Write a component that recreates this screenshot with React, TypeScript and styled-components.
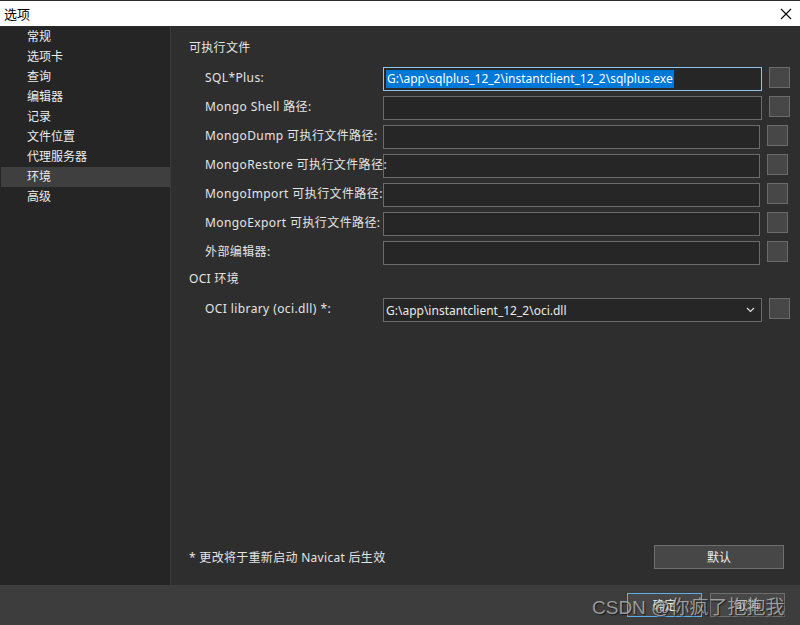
import React from 'react';
import styled, { createGlobalStyle } from 'styled-components';

const GlobalStyle = createGlobalStyle`
  html, body {
    margin: 0;
    padding: 0;
    background: #2d2d2d;
  }
  * {
    box-sizing: border-box;
  }
`;

const font = `"Noto Sans", "Noto Sans CJK SC", sans-serif`;

const Window = styled.div`
  width: 800px;
  height: 625px;
  display: flex;
  flex-direction: column;
  font-family: ${font};
  font-size: 12px;
  color: #e4e4e4;
  overflow: hidden;
`;

const TitleBar = styled.div`
  height: 27px;
  flex: none;
  background: #fff;
  border-top: 1px solid #2b2b2b;
  border-bottom: 1px solid #2b2b2b;
  display: flex;
  align-items: center;
  justify-content: space-between;
  padding: 0 8px 0 4px;
  color: #000;
  font-size: 13px;
`;

const CloseIcon = () => (
  <svg width="12" height="12" viewBox="0 0 12 12">
    <path d="M1 1 L11 11 M11 1 L1 11" stroke="#000" strokeWidth="1.1" />
  </svg>
);

const Body = styled.div`
  flex: 1;
  display: flex;
  min-height: 0;
`;

const Sidebar = styled.div`
  width: 171px;
  flex: none;
  background: #252525;
  border-right: 1px solid #3a3a3a;
  padding-left: 1px;
`;

const NavItem = styled.div<{ $active?: boolean }>`
  height: 20px;
  line-height: 20px;
  padding-left: 26px;
  background: ${(p) => (p.$active ? '#3f3f3f' : 'transparent')};
  color: #ececec;
`;

const Content = styled.div`
  flex: 1;
  background: #2e2e2e;
  display: flex;
  flex-direction: column;
  padding: 11px 10px 16px 18px;
`;

const Section = styled.div`
  display: flex;
  flex-direction: column;
  gap: 5px;
  margin-bottom: 4px;
`;

const SectionTitle = styled.div`
  height: 20px;
  line-height: 20px;
  margin-bottom: 4px;
  letter-spacing: 0.3px;
`;

const Row = styled.div`
  display: flex;
  align-items: flex-start;
  padding-left: 16px;
  height: 24px;
`;

const Label = styled.div`
  width: 178px;
  flex: none;
  height: 24px;
  line-height: 22px;
  white-space: nowrap;
  letter-spacing: 0.4px;
  position: relative;
  z-index: 2;
`;

const Field = styled.div<{ $focused?: boolean }>`
  flex: 1;
  height: 24px;
  margin-right: 7px;
  background: #262626;
  border: 1px solid ${(p) => (p.$focused ? '#8cc6ef' : '#6b6b6b')};
  display: flex;
  align-items: center;
  padding: 0 2px;
  color: #eaeaea;
`;

const Selected = styled.span`
  background: #0078d7;
  color: #fff;
  line-height: 18px;
  padding: 0 1px;
`;

const SelectText = styled.span`
  flex: 1;
`;

const Browse = styled.div<{ $narrow?: boolean }>`
  width: 21px;
  height: 21px;
  flex: none;
  margin-right: ${(p) => (p.$narrow ? 2 : 0)}px;
  background: #474747;
  border: 1px solid #6b6b6b;
`;

const Spacer = styled.div`
  flex: 1;
`;

const BottomRow = styled.div`
  display: flex;
  align-items: center;
  justify-content: space-between;
  padding-right: 6px;
`;

const Note = styled.div`
  color: #e4e4e4;
  letter-spacing: 0.3px;
`;

const Button = styled.div<{ $width: number; $primary?: boolean }>`
  width: ${(p) => p.$width}px;
  height: 24px;
  background: #474747;
  border: 1px solid ${(p) => (p.$primary ? '#5eaee8' : '#6e6e6e')};
  display: flex;
  align-items: center;
  justify-content: center;
  color: #ececec;
`;

const Footer = styled.div`
  height: 40px;
  flex: none;
  background: #3d3d3d;
  display: flex;
  align-items: center;
  justify-content: flex-end;
  gap: 8px;
  padding-right: 15px;
  position: relative;
`;

const Watermark = styled.div`
  position: absolute;
  left: 592px;
  top: 7px;
  font-family: "Liberation Sans", "Noto Sans CJK SC", sans-serif;
  font-size: 19px;
  color: rgba(190, 190, 190, 0.75);
  text-shadow: 1px 1px 1px rgba(0, 0, 0, 0.6);
  white-space: nowrap;
  pointer-events: none;
`;

const Chevron = () => (
  <svg width="9" height="6" viewBox="0 0 9 6">
    <path d="M1 1 L4.5 4.5 L8 1" stroke="#e0e0e0" strokeWidth="1.2" fill="none" />
  </svg>
);

const nav = ['常规', '选项卡', '查询', '编辑器', '记录', '文件位置', '代理服务器', '环境', '高级'];

const exeRows: { label: string; value?: string; narrow?: boolean }[] = [
  { label: 'SQL*Plus:', value: 'G:\\app\\sqlplus_12_2\\instantclient_12_2\\sqlplus.exe' },
  { label: 'Mongo Shell 路径:' },
  { label: 'MongoDump 可执行文件路径:', narrow: true },
  { label: 'MongoRestore 可执行文件路径:', narrow: true },
  { label: 'MongoImport 可执行文件路径:', narrow: true },
  { label: 'MongoExport 可执行文件路径:', narrow: true },
  { label: '外部编辑器:', narrow: true },
];

export default function App() {
  return (
    <Window>
      <GlobalStyle />
      <TitleBar>
        <span>选项</span>
        <CloseIcon />
      </TitleBar>
      <Body>
        <Sidebar>
          {nav.map((n) => (
            <NavItem key={n} $active={n === '环境'}>
              {n}
            </NavItem>
          ))}
        </Sidebar>
        <Content>
          <Section>
            <SectionTitle>可执行文件</SectionTitle>
            {exeRows.map((r, i) => (
              <Row key={r.label}>
                <Label>{r.label}</Label>
                <Field $focused={i === 0}>
                  {r.value && <Selected>{r.value}</Selected>}
                </Field>
                <Browse $narrow={r.narrow} />
              </Row>
            ))}
          </Section>
          <Section>
            <SectionTitle>OCI 环境</SectionTitle>
            <Row>
              <Label>OCI library (oci.dll) *:</Label>
              <Field>
                <SelectText>G:\app\instantclient_12_2\oci.dll</SelectText>
                <Chevron />
                <span style={{ width: 4 }} />
              </Field>
              <Browse />
            </Row>
          </Section>
          <Spacer />
          <BottomRow>
            <Note>* 更改将于重新启动 Navicat 后生效</Note>
            <Button $width={130}>默认</Button>
          </BottomRow>
        </Content>
      </Body>
      <Footer>
        <Button $width={75} $primary>
          确定
        </Button>
        <Button $width={75}>取消</Button>
        <Watermark>CSDN @你疯了抱抱我</Watermark>
      </Footer>
    </Window>
  );
}
